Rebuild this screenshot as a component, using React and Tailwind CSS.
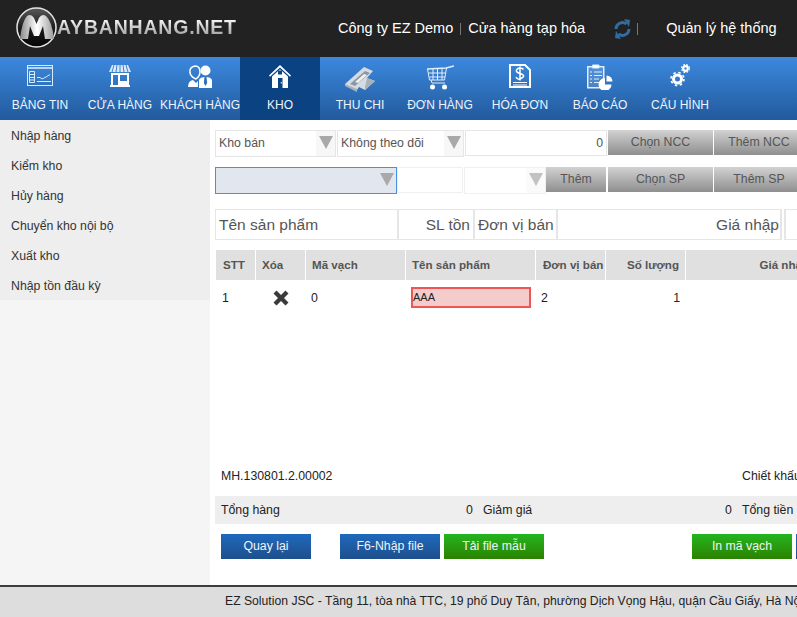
const navItems = [
  { label: "BẢNG TIN", icon: "board" },
  { label: "CỬA HÀNG", icon: "store" },
  { label: "KHÁCH HÀNG", icon: "people" },
  { label: "KHO", icon: "home", active: true },
  { label: "THU CHI", icon: "money" },
  { label: "ĐƠN HÀNG", icon: "cart" },
  { label: "HÓA ĐƠN", icon: "bill" },
  { label: "BÁO CÁO", icon: "report" },
  { label: "CẤU HÌNH", icon: "gears" },
];

const sideItems = ["Nhập hàng", "Kiểm kho", "Hủy hàng", "Chuyển kho nội bộ", "Xuất kho", "Nhập tồn đầu kỳ"];

const NavIcon = ({ name }) => {
  if (name === "board")
    return (
      <svg width="26" height="21" viewBox="0 0 26 21" fill="none" stroke="#dbe8f8" strokeWidth="1" className="mt-[1px]">
        <rect x="0.5" y="0.5" width="25" height="20" />
        <path d="M1 3h24" strokeWidth="2" stroke="#b9d3f1" />
        <path d="M2.500 6.500h5v11h-5zM2.500 9.500h5M2.500 12.500h5M2.500 15h5" />
        <path d="M10 12.500h3l2 1.500 4-2 4-2.500M10 16.500h14" />
      </svg>
    );
  if (name === "store")
    return (
      <svg width="22" height="22" viewBox="0 0 22 22" className="mt-[1px]">
        <path d="M3 0h16l3 7H0z" fill="#dfe9f5" />
        <path d="M5 0 3 7M8 0 7 7M11 0v7M14 0l1 7M17 0l2 7" stroke="#3f7fc9" strokeWidth="1" />
        <path d="M2 8h18v12h1v2H1v-2h1zM4 10v10h5V10zm7 0v6h7v-6z" fill="white" />
      </svg>
    );
  if (name === "people")
    return (
      <svg width="25" height="23" viewBox="0 0 25 23" fill="white" className="mt-[1px]">
        <circle cx="17.500" cy="5.500" r="5" />
        <path d="M11 23v-8q1-3 6.500-3t6.500 3v8z" />
        <path d="M16.500 12h2l.7 6-1.700 3-1.700-3z" fill="#2f6fbb" />
        <path d="M7 1q5 0 5 6 0 4-4 7Q3 12 2 8 1 2 7 1z" fill="none" stroke="white" strokeWidth="1.500" />
        <path d="M0 22q0-6 5-7l3 3 2-2v6H1z" />
      </svg>
    );
  if (name === "home")
    return (
      <svg width="22" height="23" viewBox="0 0 22 23" fill="white" className="mt-[1px]">
        <path d="M11 0 0 10.500l1 1.200L11 2.500l10 9.200 1-1.200z" />
        <path d="M3 11.500 11 4.200l8 7.300V23H3z" />
        <path d="M9 5.500h4v4H9z" fill="#0a4282" />
        <path d="M9 13h4.500v10H9z" fill="#0a4282" />
        <rect x="11.800" y="17" width="1" height="1.500" fill="white" />
      </svg>
    );
  if (name === "money")
    return (
      <svg width="30" height="26" viewBox="0 0 30 26" className="mt-[2px]">
        <path d="M0 18 19 1l9 4-6 7 8 3-10 9-6-3-2 3-12-5z" fill="#d5dbe2" />
        <path d="M5 18 20 5l5 2-15 13z" fill="#8c97a4" />
        <path d="M10 16 19 8l3 1-9 8z" fill="#eef1f4" />
        <path d="M0 18l12 5v3L0 20zM22 12l8 3-10 9v-3z" fill="#a9b2bc" />
      </svg>
    );
  if (name === "cart")
    return (
      <svg width="27" height="25" viewBox="0 0 27 25" fill="none" stroke="#e3edf9" strokeWidth="1" className="mt-[1px]">
        <path d="M0 4 19 3l8-2" strokeWidth="1.500" />
        <path d="M0.500 4l2 11h15l2-12M4 15l1 3h13" />
        <path d="M1.500 8h17M2.500 12h15.500M6 4v11M10.500 4v11M15 4v11" />
        <circle cx="5.500" cy="22" r="2.500" fill="white" stroke="none" />
        <circle cx="17.500" cy="22" r="2.500" fill="white" stroke="none" />
      </svg>
    );
  if (name === "bill")
    return (
      <svg width="22" height="24" viewBox="0 0 22 24" fill="none" stroke="white">
        <path d="M1 1h15l5 5v17H1z" strokeWidth="2" />
        <path d="M4 18.500h14M4 21h14" strokeWidth="1" />
        <path d="M14.500 5.500q-1-1.500-3.500-1.500T7.500 6t3.500 3.500 3.500 3-3.500 2.500-4-2M11 2.500v14" strokeWidth="1.500" />
      </svg>
    );
  if (name === "report")
    return (
      <svg width="27" height="26" viewBox="0 0 27 26" fill="none" stroke="#e3edf9" strokeWidth="1">
        <rect x="0.750" y="2.750" width="16" height="21" strokeWidth="1.500" fill="#ffffff22" />
        <path d="M5.500 1h6.500v3H5.500z" fill="white" />
        <path d="M3 8h2M7 8h8M3 11.500h2M7 11.500h8M3 15h2M7 15h5M3 18.500h2M7 18.500h5" />
        <path d="M18 14a6.500 6.500 0 1 0 6.500 6.500H18z" fill="white" stroke="none" />
        <path d="M19.500 11.500a6 6 0 0 1 6 6h-6z" fill="white" stroke="none" />
      </svg>
    );
  return (
    <svg width="20" height="23" viewBox="0 0 20 23" fill="none" stroke="white">
      <circle cx="7.500" cy="15" r="4" strokeWidth="3" />
      <circle cx="7.500" cy="15" r="6.500" strokeWidth="1.600" strokeDasharray="2.500 2.600" />
      <circle cx="15.500" cy="4.500" r="2.300" strokeWidth="2.200" />
      <circle cx="15.500" cy="4.500" r="3.900" strokeWidth="1.200" strokeDasharray="1.800 1.300" />
    </svg>
  );
};

const Arrow = () => (
  <svg width="14" height="13" viewBox="0 0 14 13" className="shrink-0">
    <path d="M0 0h14L7 13z" fill="#a9a9a9" />
  </svg>
);

const SelectBox = ({ text, className }) => (
  <div className={`flex h-[27px] items-center justify-between border border-[#e6e6e6] bg-white pl-[3px] text-[12.3px] text-[#555] ${className}`}>
    <span>{text}</span>
    <span className="flex h-full w-[19px] items-start justify-center bg-[#f7f7f7] pt-[5px]">
      <Arrow />
    </span>
  </div>
);

const GrayButton = ({ children, className }) => (
  <div className={`flex h-[25px] shrink-0 items-center justify-center bg-gradient-to-b from-[#d2d2d2] to-[#8f8f8f] text-[12.3px] text-[#555] ${className}`}>
    {children}
  </div>
);

const ColorButton = ({ children, green, className }) => (
  <div
    className={`flex h-[25px] shrink-0 items-center justify-center text-[12.3px] text-[#eef4fb] ${
      green ? "bg-gradient-to-b from-[#22b51e] to-[#2b8200]" : "bg-gradient-to-b from-[#1e69bd] to-[#1e4f8c]"
    } ${className}`}
  >
    {children}
  </div>
);

const headerCols = [
  { label: "STT", width: "w-[39px]", cls: "pl-[7px]" },
  { label: "Xóa", width: "w-[49px]", cls: "pl-[6px]" },
  { label: "Mã vạch", width: "w-[99px]", cls: "pl-[6px]" },
  { label: "Tên sản phẩm", width: "w-[129px]", cls: "pl-[6px]" },
  { label: "Đơn vị bán", width: "w-[69px]", cls: "pl-[7px]" },
  { label: "Số lượng", width: "w-[79px]", cls: "justify-end pr-[6px]" },
  { label: "Giá nhập", width: "w-[129px]", cls: "justify-end pr-[6px]" },
];

export default function App() {
  return (
    <div className="flex h-[617px] w-[797px] flex-col overflow-hidden bg-white font-['Liberation_Sans',Arial,sans-serif]">
      {/* Top bar */}
      <header className="flex h-[57px] shrink-0 items-center bg-[#222222] pt-[1px] text-[14.5px] text-white">
        <div className="mb-[3px] ml-[16px] flex w-[322px] items-center">
          <svg width="41" height="41" viewBox="0 0 41 41" className="shrink-0">
            <defs>
              <linearGradient id="mball" x1="0" y1="0" x2="0" y2="1">
                <stop offset="0" stopColor="#5a5a5a" />
                <stop offset="0.5" stopColor="#1c1c1c" />
                <stop offset="1" stopColor="#050505" />
              </linearGradient>
              <linearGradient id="mletter" x1="0" y1="0" x2="1" y2="0">
                <stop offset="0" stopColor="#8a8a8a" />
                <stop offset="0.5" stopColor="#ffffff" />
                <stop offset="1" stopColor="#9a9a9a" />
              </linearGradient>
            </defs>
            <circle cx="20.500" cy="20.500" r="19.500" fill="url(#mball)" stroke="#e4e4e4" strokeWidth="1.500" />
            <path d="M4 32 Q6 14 11 9 Q15 6 18 11 L20.500 17 L23 11 Q26 6 30 9 Q36 14 38 32 H29 L27 19 L23 29 H18 L14 19 L12 32 Z" fill="url(#mletter)" />
          </svg>
          <span className="bg-gradient-to-b from-white to-[#9a9a9a] bg-clip-text text-[19.5px] leading-none font-bold tracking-[0.8px] text-transparent">
            AYBANHANG.NET
          </span>
        </div>
        <span className="whitespace-nowrap">Công ty EZ Demo</span>
        <span className="ml-[7px] h-[12px] w-px bg-[#777]" />
        <span className="ml-[7px] whitespace-nowrap">Cửa hàng tạp hóa</span>
        <svg width="17" height="20" viewBox="0 0 17 20" className="ml-[29px]" fill="none" stroke="#2f6da3" strokeWidth="3">
          <path d="M2 10a6.500 6.500 0 0 1 10.500-5" />
          <path d="M15 10a6.500 6.500 0 0 1-10.500 5" />
          <path d="M10 0l6 1-1 7z" fill="#2f6da3" stroke="none" />
          <path d="M7 20l-6-1 1-7z" fill="#2f6da3" stroke="none" />
        </svg>
        <span className="ml-[6px] h-[12px] w-px bg-[#777]" />
        <span className="ml-[28px] whitespace-nowrap">Quản lý hệ thống</span>
      </header>

      {/* Main nav */}
      <nav className="flex h-[63px] shrink-0 bg-gradient-to-b from-[#3c89de] to-[#225a9d]">
        {navItems.map((item) => (
          <div
            key={item.label}
            className={`flex h-full w-[80px] shrink-0 flex-col items-center ${item.active ? "bg-[#0a4282]" : ""}`}
          >
            <div className="flex h-[39px] items-start justify-center pt-[7px]">
              <NavIcon name={item.icon} />
            </div>
            <span className="text-[12px] leading-[18px] whitespace-nowrap text-[#eef4fb]">{item.label}</span>
          </div>
        ))}
      </nav>

      <div className="flex min-h-0 flex-1">
        {/* Sidebar */}
        <aside className="w-[210px] shrink-0 bg-[#f5f5f5]">
          <ul className="bg-[#eeeeee]">
            {sideItems.map((label) => (
              <li key={label} className="flex h-[30px] items-center pt-[2px] pl-[11px] text-[12.3px] text-[#333]">
                {label}
              </li>
            ))}
          </ul>
        </aside>

        {/* Content */}
        <main className="relative min-w-0 flex-1 overflow-hidden pt-[10px] pl-[5px] text-[12.3px]">
          <div className="flex h-[27px] w-[700px] items-start gap-[1px]">
            <SelectBox text="Kho bán" className="w-[121px]" />
            <SelectBox text="Không theo dõi" className="w-[127px]" />
            <div className="flex h-[26px] w-[142px] items-center justify-end border border-[#e6e6e6] pr-[3px] text-[#555]">0</div>
            <GrayButton className="w-[105px]">Chọn NCC</GrayButton>
            <GrayButton className="w-[90px]">Thêm NCC</GrayButton>
          </div>

          <div className="mt-[10px] flex h-[27px] w-[700px] items-start">
            <div className="flex h-[27px] w-[182px] items-start justify-end border border-[#4a90e2] bg-[#e1e6ef] pt-[5px] pr-[2px]">
              <Arrow />
            </div>
            <div className="h-[26px] w-[66px] border border-[#f0f0f0]" />
            <div className="ml-[1px] flex h-[27px] w-[82px] items-start justify-end border border-[#f0f0f0]">
              <span className="flex h-full w-[19px] items-start justify-center bg-[#f9f9f9] pt-[5px] opacity-70">
                <Arrow />
              </span>
            </div>
            <GrayButton className="w-[60px]">Thêm</GrayButton>
            <GrayButton className="ml-[2px] w-[105px]">Chọn SP</GrayButton>
            <GrayButton className="ml-[1px] w-[90px]">Thêm SP</GrayButton>
          </div>

          <div className="mt-[15px] flex h-[31px] w-[700px] text-[15.5px] text-[#555]">
            <div className="flex w-[182px] items-center border-y border-l border-[#e6e6e6] pl-[3px]">Tên sản phẩm</div>
            <div className="flex w-[76px] items-center justify-end border-y border-l-2 border-[#e6e6e6] pr-[3px]">SL tồn</div>
            <div className="flex w-[83px] items-center border-y border-l-2 border-[#e6e6e6] pl-[3px] whitespace-nowrap">Đơn vị bán</div>
            <div className="flex w-[226px] items-center justify-end border-x-2 border-y border-[#e6e6e6] pr-[1px]">Giá nhập</div>
            <div className="ml-[2px] w-[40px] border-y border-l-2 border-[#e6e6e6]" />
          </div>

          {/* Table */}
          <div className="mt-[10px] flex h-[30px] w-[760px] gap-[1px] pl-[1px] text-[11.6px] font-bold text-[#555]">
            {headerCols.map((col) => (
              <div key={col.label} className={`flex h-full shrink-0 items-center whitespace-nowrap bg-[#e0e0e0] ${col.width} ${col.cls}`}>
                {col.label}
              </div>
            ))}
          </div>
          <div className="flex h-[35px] w-[760px] items-center pl-[1px] text-[#222]">
            <div className="w-[40px] pt-[1px] pl-[6px]">1</div>
            <div className="flex w-[50px] justify-center">
              <svg width="16" height="16" viewBox="0 0 16 16" fill="#3a3a3a">
                <path d="M3.500 0.500 8 5l4.500-4.500 3 3L11 8l4.500 4.500-3 3L8 11l-4.500 4.500-3-3L5 8 .5 3.500z" />
              </svg>
            </div>
            <div className="w-[105px] pt-[1px] pl-[5px]">0</div>
            <div className="flex h-[21px] w-[120px] items-center border-2 border-[#f05555] bg-[#f4cccc] text-[11px] text-[#222]">AAA</div>
            <div className="w-[75px] pt-[1px] pl-[10px]">2</div>
            <div className="w-[74px] pt-[1px] text-right">1</div>
          </div>

          {/* Bottom of content */}
          <div className="absolute top-[347px] left-[11px] text-[#222]">MH.130801.2.00002</div>
          <div className="absolute top-[347px] left-[532px] whitespace-nowrap text-[#222]">Chiết khấu</div>

          <div className="absolute top-[376px] left-[5px] flex h-[28px] w-[590px] items-center bg-[#eeeeee] pt-[1px] text-[#222]">
            <span className="w-[251px] pl-[6px]">Tổng hàng</span>
            <span className="w-[7px]">0</span>
            <span className="w-[252px] pl-[10px]">Giảm giá</span>
            <span className="w-[7px]">0</span>
            <span className="ml-[10px] whitespace-nowrap">Tổng tiền</span>
          </div>

          <div className="absolute top-[414px] left-[11px] flex w-[700px] items-start">
            <ColorButton className="w-[90px]">Quay lại</ColorButton>
            <ColorButton className="ml-[29px] w-[100px]">F6-Nhập file</ColorButton>
            <ColorButton green className="ml-[4px] w-[100px]">Tải file mẫu</ColorButton>
            <ColorButton green className="ml-[148px] w-[100px]">In mã vạch</ColorButton>
            <ColorButton className="ml-[4px] w-[20px]" />
          </div>
        </main>
      </div>

      {/* Footer */}
      <footer className="flex h-[32px] shrink-0 items-center overflow-hidden border-t-2 border-[#3d3d3d] bg-[#dddddd] pb-[2px] pl-[225px] text-[12.2px] whitespace-nowrap text-[#222]">
        EZ Solution JSC - Tầng 11, tòa nhà TTC, 19 phố Duy Tân, phường Dịch Vọng Hậu, quận Cầu Giấy, Hà Nội
      </footer>
    </div>
  );
}
